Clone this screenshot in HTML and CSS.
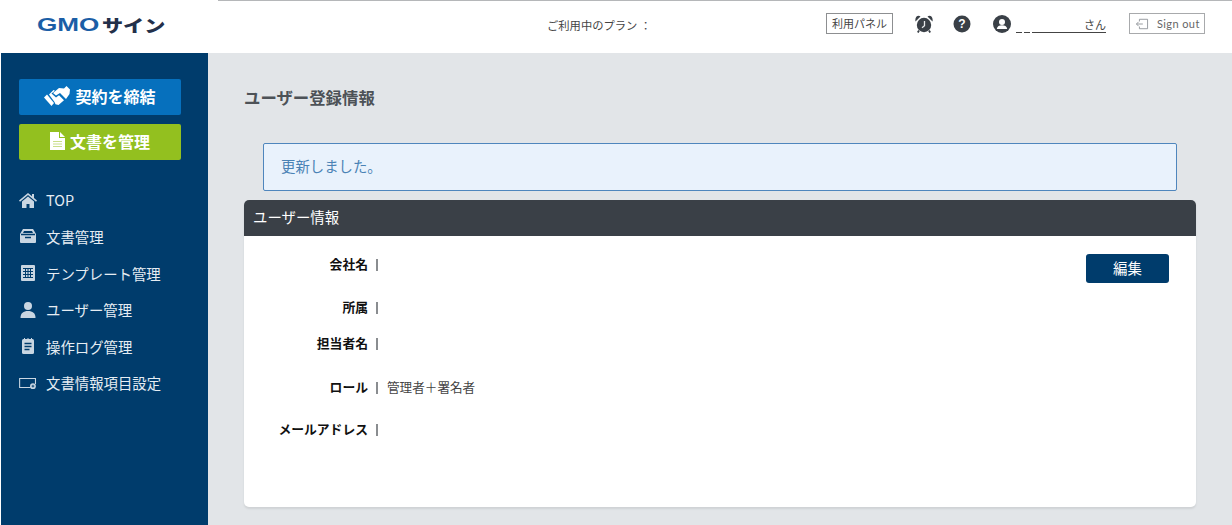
FILE: index.html
```html
<!DOCTYPE html>
<html lang="ja">
<head>
<meta charset="utf-8">
<title>ユーザー登録情報</title>
<link rel="stylesheet" href="styles.css">
</head>
<body>
<header class="topbar">
  <div class="logo"><span class="logo-gmo">GMO</span><span class="logo-sign">サイン</span></div>
  <div class="plan">ご利用中のプラン ：</div>
  <a class="panel-btn">利用パネル</a>
  <svg class="ico-alarm" viewBox="0 0 18 18"><circle cx="9" cy="10" r="7.200" fill="#3a4047"/><path d="M.5 6.500 5.500 1.500C3 -.5-.5 2 .5 6.500zM17.500 6.500 12.500 1.500C15 -.5 18.500 2 17.500 6.500z" fill="#3a4047"/><path d="M4 15.500 2.800 17.500M14 15.500 15.200 17.500" stroke="#3a4047" stroke-width="1.800"/><path d="M9.500 6v4.800L7 12.800" stroke="#e8eaec" stroke-width="1.300" fill="none"/></svg>
  <svg class="ico-help" viewBox="0 0 18 18"><circle cx="9" cy="9" r="8.500" fill="#3a4047"/><text x="9" y="13.200" class="help-mark">?</text></svg>
  <svg class="ico-user" viewBox="0 0 18 18"><circle cx="9" cy="9" r="9" fill="#3a4047"/><circle cx="9" cy="7" r="3" fill="#fff"/><path d="M3.800 14c.4-2.800 2.400-3.800 5.200-3.800s4.800 1 5.200 3.800z" fill="#fff"/></svg>
  <a class="username"><span class="dash"></span><span class="dash"></span><span class="blank"></span><span class="san">さん</span></a>
  <a class="signout">
    <svg class="ico-signout" viewBox="0 0 16 14"><path d="M5 4V1.500h9.500v11H5V10" fill="none" stroke="#8a8f94"/><path d="M9 7H1.500M4 4.500 1.500 7 4 9.500" fill="none" stroke="#8a8f94"/></svg>
    Sign out
  </a>
</header>
<div class="layout">
  <aside class="sidebar">
    <a class="cta cta-blue">
      <svg class="ico-hands" viewBox="0 0 26 20"><path d="M0 11.500 3 8.500l7 8.500-2.500 3z" fill="#fff"/><path d="M26 3.500 22.500 0 20 2.500l-5-.5-6 5 3 2.500 4-2.500 6 6 3.500-5z" fill="#fff"/><path d="M5 8.500 9.500 4l1.500.8L7.500 7.500l4.500 4 3-2.200 5 5-5.500 4.700-3-.8-1-2.200z" fill="#fff"/></svg>
      契約を締結
    </a>
    <a class="cta cta-green">
      <svg class="ico-doc" viewBox="0 0 15 18"><path d="M0 0h9v6h6v12H0z" fill="#fff"/><path d="M10 0l5 5h-5z" fill="#fff"/><path d="M3 9.500h9M3 12h9M3 14.500h9" stroke="#c9de8a"/></svg>
      文書を管理
    </a>
    <nav class="menu">
      <a class="menu-item"><svg viewBox="0 0 18 16"><path d="M9 1 0 8.500l1 1.200L9 3l8 6.700 1-1.200-3-2.500V2h-2v2.300z" fill="#c9d6e2"/><path d="M9 4.500 3 9.500V16h4.500v-4h3v4H15V9.500z" fill="#c9d6e2"/></svg>TOP</a>
      <a class="menu-item"><svg viewBox="0 0 18 16"><path d="M4 1h10l3 5v8a1 1 0 0 1-1 1H2a1 1 0 0 1-1-1V6z" fill="#c9d6e2"/><path d="M2 6.500h14" stroke="#003c6c" stroke-width="1.500"/><path d="M6 9.500h6" stroke="#003c6c" stroke-width="1.500"/><path d="M5 3h8l1 2H4z" fill="#003c6c"/></svg>文書管理</a>
      <a class="menu-item"><svg viewBox="0 0 18 16"><rect x="2" width="14" height="16" rx="1" fill="#c9d6e2"/><path d="M4 3.500h10M4 6.500h10M4 9.500h10M4 12.500h10M6.500 3v10M9 3v10M11.500 3v10" stroke="#003c6c"/></svg>テンプレート管理</a>
      <a class="menu-item"><svg viewBox="0 0 18 16"><circle cx="9" cy="4" r="4" fill="#c9d6e2"/><path d="M1.500 16c0-5 3-7 7.500-7s7.500 2 7.500 7z" fill="#c9d6e2"/></svg>ユーザー管理</a>
      <a class="menu-item"><svg viewBox="0 0 18 16"><rect x="3" y="1" width="12" height="15" rx="1.500" fill="#c9d6e2"/><path d="M5.500 0v2M9 0v2M12.500 0v2" stroke="#c9d6e2"/><path d="M5.500 5.500h7M5.500 8.500h7M5.500 11.500h5" stroke="#003c6c" stroke-width="1.300"/></svg>操作ログ管理</a>
      <a class="menu-item"><svg viewBox="0 0 20 14"><path d="M13 12H.7V2h17.600v6" fill="none" stroke="#c9d6e2" stroke-width="1.200"/><circle cx="15.500" cy="10.500" r="3.200" fill="#c9d6e2"/><path d="M14 10.500h3M15.500 9v3" stroke="#003c6c"/></svg>文書情報項目設定</a>
    </nav>
  </aside>
  <main class="content">
    <h1 class="page-title">ユーザー登録情報</h1>
    <div class="alert">更新しました。</div>
    <section class="panel">
      <h2 class="panel-head">ユーザー情報</h2>
      <div class="panel-body">
        <dl class="fields">
          <dt>会社名</dt><dd></dd>
          <dt>所属</dt><dd></dd>
          <dt>担当者名</dt><dd></dd>
          <dt>ロール</dt><dd>管理者＋署名者</dd>
          <dt>メールアドレス</dt><dd></dd>
        </dl>
        <a class="edit-btn">編集</a>
      </div>
    </section>
  </main>
</div>
</body>
</html>
```

FILE: styles.css
```css
* { box-sizing: border-box; }
html, body { margin: 0; height: 525px; overflow: hidden; background: #fff; }
body { font-family: "Noto Sans CJK JP", "Noto Sans", sans-serif; color: #3a4047; }
a { text-decoration: none; }

.topbar { display: flex; align-items: center; height: 53px; padding-bottom: 6px; background: linear-gradient(#b5b7b9, #b5b7b9) 218px 0 / 100% 1px no-repeat #fff; }
.logo { width: 547px; margin-top: 2px; padding-left: 37px; display: flex; align-items: center; font-weight: 900; line-height: 1; }
.logo-gmo { flex: none; width: 65px; font-family: "Liberation Sans", sans-serif; font-size: 18px; color: #1b5ea6; transform: scaleX(1.45); transform-origin: left; }
.logo-sign { flex: none; font-size: 17px; color: #23304a; transform: scaleX(1.24); transform-origin: left; }
.plan { width: 279px; margin-top: 2px; font-size: 11.3px; color: #444; white-space: nowrap; }
.panel-btn { width: 67px; height: 21px; border: 1px solid #8d8f91; font-size: 11px; color: #444; text-align: center; line-height: 18px; white-space: nowrap; }
.ico-alarm { width: 18px; height: 18px; margin-left: 22px; }
.ico-help { width: 18px; height: 18px; margin-left: 20px; }
.help-mark { font: 700 12px "Liberation Sans", sans-serif; fill: #fff; text-anchor: middle; }
.ico-user { width: 18px; height: 18px; margin-left: 22px; }
.username { width: 90px; height: 16px; margin: 3px 0 0 5px; font-size: 11px; color: #444; white-space: nowrap; display: flex; align-items: flex-end; gap: 2px; }
.dash { width: 6px; border-bottom: 1px solid #444; }
.blank { flex: 1; margin-right: -2px; border-bottom: 1px solid #444; }
.san { border-bottom: 1px solid #444; line-height: 15px; }
.signout { width: 76px; height: 21px; margin-left: 23px; border: 1px solid #a8aaac; display: flex; align-items: center; gap: 8px; padding-left: 5px; font: 400 11px/19px Lato, sans-serif; color: #666; letter-spacing: .4px; white-space: nowrap; }
.ico-signout { width: 14px; height: 12px; }

.layout { display: flex; height: 472px; }
.sidebar { width: 207px; margin-left: 1px; background: #003c6c; padding: 26px 0 0 18px; flex: none; }
.cta { display: flex; align-items: center; justify-content: center; width: 162px; height: 36px; padding-bottom: 2px; border-radius: 2px; color: #fff; font-size: 16px; font-weight: 700; margin-bottom: 9px; line-height: 1; }
.cta-blue { background: #0670bd; gap: 5px; }
.cta-green { background: #93c01f; gap: 5px; }
.ico-hands { width: 26px; height: 20px; }
.ico-doc { width: 15px; height: 18px; }
.menu { display: flex; flex-direction: column; margin-top: 21.6px; }
.menu-item { display: flex; align-items: center; gap: 9px; height: 36.6px; color: #e6edf3; font-size: 14.4px; white-space: nowrap; }
.menu-item svg { width: 18px; height: 16px; flex: none; }

.content { flex: 1; background: #e2e5e8; padding: 0 36px; min-width: 0; }
.page-title { margin: 32px 0 0; font-size: 16.4px; font-weight: 700; line-height: 24px; color: #4d5257; }
.alert { margin: 34px 19px 0; height: 48px; background: #e9f2fc; border: 1px solid #4f86bd; border-radius: 2px; color: #4a82b5; font-size: 14.4px; line-height: 44px; padding-left: 17px; }
.panel { margin-top: 9px; height: 307px; background: #fff; border-radius: 5px; box-shadow: 0 2px 2px #cfd2d5; overflow: hidden; }
.panel-head { margin: 0; height: 36px; background: #3a4047; color: #fff; font-size: 14.4px; font-weight: 400; line-height: 34px; padding-left: 9px; }
.panel-body { display: flex; justify-content: space-between; align-items: flex-start; padding: 18px 27px 0 0; }
.fields { margin: -12px 0 0; display: grid; grid-template-columns: 124px auto; grid-template-rows: 46px 40px 32px 56px 28px; align-items: center; }
.fields dt { font-size: 12.8px; font-weight: 700; line-height: 18px; padding-bottom: 2px; color: #111; text-align: right; white-space: nowrap; }
.fields dd { margin: 0 0 0 8px; padding-left: 11px; height: 12px; line-height: 10px; font-size: 12.6px; color: #444; background: linear-gradient(#8a8d90, #8a8d90) 0 0 / 2px 100% no-repeat; white-space: nowrap; min-width: 100px; }
.edit-btn { display: block; width: 83px; height: 29px; background: #003c6c; border-radius: 3px; color: #fff; font-size: 14.4px; text-align: center; line-height: 27px; }
```
